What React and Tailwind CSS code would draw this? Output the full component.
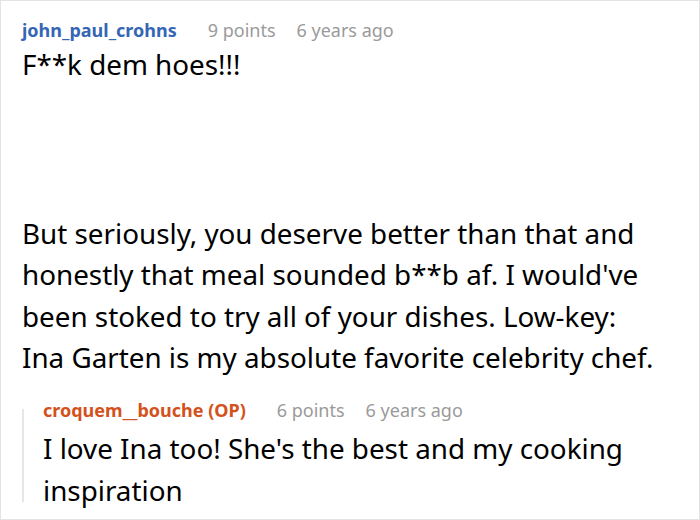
export default function App() {
  return (
    <div
      className="h-[520px] w-[700px] overflow-hidden border border-[#e3e3e3] bg-white pl-[21px] pt-[17px] text-black"
      style={{ fontFamily: '"Noto Sans", "Open Sans", sans-serif' }}
    >
      {/* Comment */}
      <div className="flex items-baseline text-[18px] leading-[24px]">
        <span className="font-bold text-[#3566b5]">john_paul_crohns</span>
        <span className="ml-[31px] text-[#9a9a9a]">9 points</span>
        <span className="ml-[21px] text-[#9a9a9a]">6 years ago</span>
      </div>
      <p className="mt-[2px] text-[27.8px] leading-[41.6px]">F**k dem hoes!!!</p>
      <p className="mt-[127px] text-[27.8px] leading-[41.6px]">
        But seriously, you deserve better than that and
        <br />
        honestly that meal sounded b**b af. I would've
        <br />
        been stoked to try all of your dishes. Low-key:
        <br />
        Ina Garten is my absolute favorite celebrity chef.
      </p>

      {/* Reply */}
      <div className="mt-[19px] flex">
        <div className="mb-[9px] mt-[11px] w-[2px] bg-[#e6e6e6]" />
        <div className="ml-[19px]">
          <div className="flex items-baseline text-[18px] leading-[24px]">
            <span className="font-bold text-[#d4511c]">croquem__bouche (OP)</span>
            <span className="ml-[31px] text-[#9a9a9a]">6 points</span>
            <span className="ml-[21px] text-[#9a9a9a]">6 years ago</span>
          </div>
          <p className="mt-[6px] text-[27.8px] leading-[41.6px]">
            I love Ina too! She's the best and my cooking
            <br />
            inspiration
          </p>
        </div>
      </div>
    </div>
  );
}
